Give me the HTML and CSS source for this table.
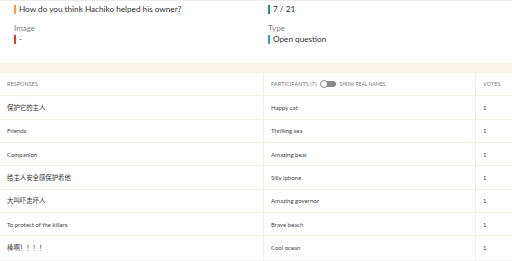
FILE: index.html
```html
<!DOCTYPE html>
<html>
<head>
<meta charset="utf-8">
<link rel="stylesheet" href="styles.css">
</head>
<body>
<section class="info">
  <div class="field">
    <div class="val"><span class="bar orange"></span>How do you think Hachiko helped his owner?</div>
  </div>
  <div class="field">
    <div class="val"><span class="bar green"></span>7 / 21</div>
  </div>
  <div class="field">
    <div class="label">Image</div>
    <div class="val"><span class="bar red"></span>-</div>
  </div>
  <div class="field">
    <div class="label">Type</div>
    <div class="val"><span class="bar blue"></span>Open question</div>
  </div>
</section>
<div class="band"></div>
<section class="table">
  <div class="row head">
    <div class="cell c1">RESPONSES</div>
    <div class="cell c2">PARTICIPANTS (7)<span class="toggle"><span class="knob"></span></span><span class="small">SHOW REAL NAMES</span></div>
    <div class="cell c3">VOTES</div>
  </div>
  <div class="row"><div class="cell c1 zh">保护它的主人</div><div class="cell c2">Happy cat</div><div class="cell c3">1</div></div>
  <div class="row"><div class="cell c1">Friends</div><div class="cell c2">Thrilling sea</div><div class="cell c3">1</div></div>
  <div class="row"><div class="cell c1">Companion</div><div class="cell c2">Amazing bear</div><div class="cell c3">1</div></div>
  <div class="row"><div class="cell c1 zh">给主人安全感保护着他</div><div class="cell c2">Silly iphone</div><div class="cell c3">1</div></div>
  <div class="row"><div class="cell c1 zh">大叫吓走坏人</div><div class="cell c2">Amazing governor</div><div class="cell c3">1</div></div>
  <div class="row"><div class="cell c1">To protect of the killers</div><div class="cell c2">Brave beach</div><div class="cell c3">1</div></div>
  <div class="row"><div class="cell c1 zh">棒啊！！！！</div><div class="cell c2">Cool ocean</div><div class="cell c3">1</div></div>
</section>
<div class="band bottom"></div>
</body>
</html>
```
FILE: styles.css
```css
html, body {
  margin: 0;
  padding: 0;
  background: #ffffff;
}
body {
  font-family: Lato, "Noto Sans CJK SC", sans-serif;
  color: #333;
  width: 512px;
  height: 261px;
  overflow: hidden;
}
.info {
  display: grid;
  grid-template-columns: 254px 1fr;
  grid-template-rows: 19px 44px;
  padding-left: 14px;
  border-top: 1px solid #ececec;
  height: 62px;
  box-sizing: content-box;
}
.field {
  display: flex;
  flex-direction: column;
  justify-content: flex-start;
}
.field:nth-child(1), .field:nth-child(2) {
  padding-top: 3px;
}
.field:nth-child(3), .field:nth-child(4) {
  padding-top: 2px;
}
.label {
  font-size: 8px;
  color: #808080;
  height: 12px;
  line-height: 12px;
}
.val {
  display: flex;
  align-items: center;
  font-size: 8.2px;
  color: #333;
  height: 11px;
  line-height: 11px;
}
.bar {
  display: inline-block;
  width: 2px;
  height: 9px;
  margin-right: 3px;
}
.orange { background: #f39a47; }
.green { background: #13967a; }
.red { background: #e0392f; }
.blue { background: #2b9fd9; }
.band {
  height: 10px;
  background: #f8f2ea;
}
.band.bottom {
  height: 3px;
}
.table {
  display: flex;
  flex-direction: column;
}
.row {
  display: grid;
  grid-template-columns: 263px 212px 1fr;
  height: 23.33px;
  border-bottom: 1px solid #f6efe7;
  box-sizing: border-box;
}
.row:last-child {
  border-bottom: none;
}
.cell {
  display: flex;
  align-items: center;
  font-size: 6px;
  color: #444;
  padding-left: 7px;
}
.cell.c2, .cell.c3 {
  border-left: 1px solid #f2ede8;
}
.cell.zh {
  font-size: 6.4px;
  color: #333;
}
.head .cell {
  font-size: 5.4px;
  color: #777;
  letter-spacing: 0.1px;
}
.toggle {
  display: inline-block;
  position: relative;
  width: 15px;
  height: 6px;
  border-radius: 4px;
  background: #8a8a8a;
  margin-left: 5px;
  margin-right: 3px;
}
.knob {
  position: absolute;
  left: -1px;
  top: -1px;
  width: 6px;
  height: 6px;
  border-radius: 50%;
  background: #fff;
  border: 1px solid #8a8a8a;
}
.small {
  font-size: 4.7px;
  color: #777;
}
```
